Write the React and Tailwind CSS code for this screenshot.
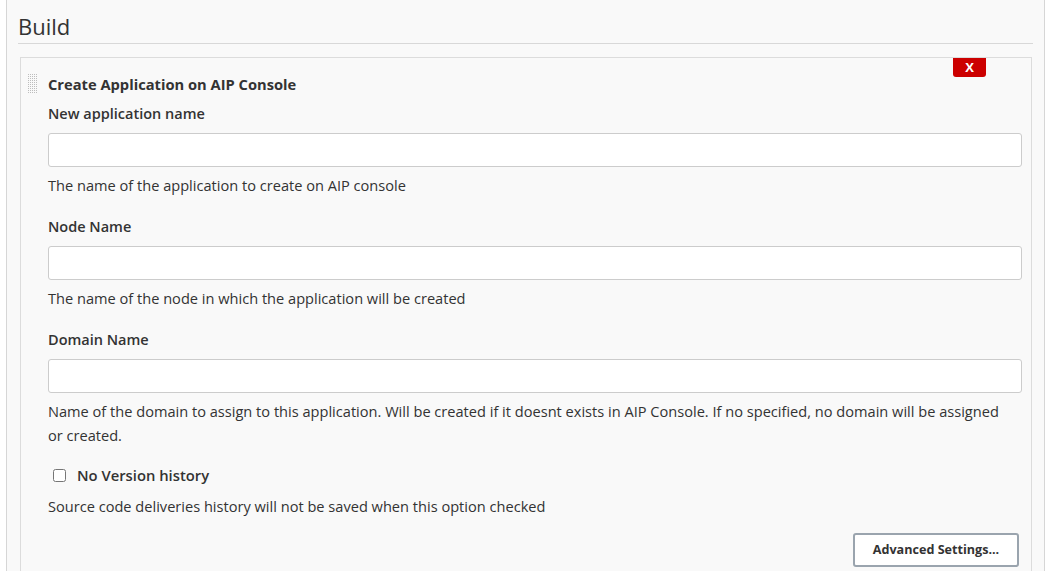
const fields = [
  { label: "New application name", help: "The name of the application to create on AIP console" },
  { label: "Node Name", help: "The name of the node in which the application will be created" },
  {
    label: "Domain Name",
    help: "Name of the domain to assign to this application. Will be created if it doesnt exists in AIP Console. If no specified, no domain will be assigned or created.",
  },
];

function DragHandle() {
  return (
    <svg width="11" height="21" viewBox="0 0 11 21" className="block shrink-0">
      {Array.from({ length: 10 }).map((_, r) =>
        Array.from({ length: 5 }).map((_, c) => (
          <rect key={r + "-" + c} x={c * 2} y={r * 2} width="1" height="1" fill="#bdbdbd" />
        ))
      )}
    </svg>
  );
}

function Field({ label, help }) {
  return (
    <div className="flex flex-col">
      <div className="h-[26px] text-[14.5px] font-semibold leading-[26px] text-[#333]">{label}</div>
      <input
        type="text"
        className="mt-[6px] h-[34px] w-full rounded-[3px] border border-[#cccccc] bg-white px-2 outline-none"
      />
      <p className="mt-[6px] pr-[14px] text-[14.6px] leading-[24px] text-[#333]">{help}</p>
    </div>
  );
}

export default function App() {
  return (
    <div className="h-[571px] overflow-hidden bg-white font-['Segoe_UI','Open_Sans',sans-serif]">
      <div className="ml-[6px] mr-[3px] h-full border-x border-[#d6d6d6] bg-[#f9f9f9] pl-[11px] pr-[11px]">
        <h2 className="border-b border-[#d8d8d8] pt-[12px] pb-[3px] text-[22px] leading-[28px] text-[#333]">
          Build
        </h2>
        <div className="relative mt-[13px] ml-[2px] mr-[1px] h-[600px] border border-[#dcdcdc] bg-[#f9f9f9] pl-[27px] pr-[9px]">
          <button className="absolute right-[45px] top-0 flex h-[19px] w-[33px] items-center justify-center rounded-b-[3px] bg-[#cc0000] text-[13px] font-bold text-white">
            X
          </button>
          <div className="absolute left-[7px] top-[16px]">
            <DragHandle />
          </div>
          <div className="pt-[15px] text-[14.7px] font-bold leading-[22px] text-[#333]">Create Application on AIP Console</div>
          <div className="mt-[6px] flex flex-col gap-[17px]">
            {fields.map((f) => (
              <Field key={f.label} {...f} />
            ))}
          </div>
          <div className="mt-[17px] flex h-[22px] items-center pl-[5px]">
            <input type="checkbox" className="m-0 h-[13px] w-[13px] shrink-0" />
            <span className="ml-[11px] text-[14.8px] font-semibold text-[#333]">No Version history</span>
          </div>
          <p className="mt-[8px] text-[14.6px] leading-[24px] text-[#333]">
            Source code deliveries history will not be saved when this option checked
          </p>
          <div className="mt-[15px] flex justify-end pr-[3px]">
            <button className="h-[34px] w-[166px] rounded-[3px] border-2 border-[#9aa4ae] bg-white text-[12.6px] font-bold text-[#333]">
              Advanced Settings...
            </button>
          </div>
        </div>
      </div>
    </div>
  );
}
